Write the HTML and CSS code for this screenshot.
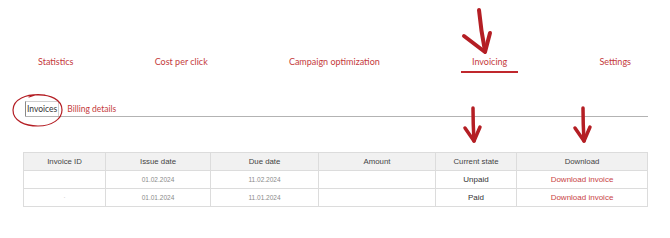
FILE: index.html
```html
<!DOCTYPE html>
<html lang="en">
<head>
    <meta charset="UTF-8">
    <title>Invoicing</title>
    <link rel="stylesheet" href="styles.css">
</head>
<body>
    <div class="page">
        <nav class="main-nav">
            <a href="#">Statistics</a>
            <a href="#">Cost per click</a>
            <a href="#">Campaign optimization</a>
            <a href="#" class="active">Invoicing</a>
            <a href="#">Settings</a>
        </nav>

        <div class="tabs">
            <span class="tab current">Invoices</span>
            <a href="#" class="tab">Billing details</a>
        </div>

        <table class="invoices">
            <thead>
                <tr>
                    <th class="c-id">Invoice ID</th>
                    <th class="c-issue">Issue date</th>
                    <th class="c-due">Due date</th>
                    <th class="c-amount">Amount</th>
                    <th class="c-state">Current state</th>
                    <th class="c-dl">Download</th>
                </tr>
            </thead>
            <tbody>
                <tr>
                    <td></td>
                    <td class="date">01.02.2024</td>
                    <td class="date">11.02.2024</td>
                    <td></td>
                    <td class="state">Unpaid</td>
                    <td><a href="#" class="dl">Download invoice</a></td>
                </tr>
                <tr>
                    <td class="faint">·</td>
                    <td class="date">01.01.2024</td>
                    <td class="date">11.01.2024</td>
                    <td></td>
                    <td class="state">Paid</td>
                    <td><a href="#" class="dl">Download invoice</a></td>
                </tr>
            </tbody>
        </table>

        <!-- hand-drawn annotations -->
        <svg class="mark mark-circle" width="60" height="40" viewBox="0 0 60 40">
            <path d="M35 5 C15 3, 3 10, 3 20 C3 31, 15 36, 28 36 C42 36, 52 29, 52 20 C52 10, 41 4, 25 5 L19 7" />
        </svg>
        <svg class="mark mark-big" width="40" height="55" viewBox="0 0 40 55">
            <path d="M24 5 Q26 26 30 46" />
            <path d="M9 31 L30 47 L35 28" />
        </svg>
        <svg class="mark mark-state" width="25" height="42" viewBox="0 0 25 42">
            <path d="M13 4 Q13 20 14 37" />
            <path d="M5 24 L14 37 L20 23" />
        </svg>
        <svg class="mark mark-dl" width="25" height="42" viewBox="0 0 25 42">
            <path d="M13 4 Q13 20 14 37" />
            <path d="M5 24 L14 37 L20 23" />
        </svg>
    </div>
</body>
</html>
```

FILE: styles.css
```css
body {
    margin: 0;
    background: #fff;
    font-family: "Liberation Sans", Arial, sans-serif;
    color: #333;
}
.page {
    position: relative;
    width: 670px;
    height: 238px;
    overflow: hidden;
}
.main-nav {
    display: flex;
    justify-content: space-between;
    align-items: flex-start;
    height: 73px;
    padding: 0 39px 0 38px;
    box-sizing: border-box;
}
.main-nav a {
    font-family: Lato, "Noto Sans", sans-serif;
    font-size: 9px;
    line-height: 12px;
    color: #c53a3c;
    text-decoration: none;
    padding-top: 56px;
}
.main-nav a.active {
    padding: 56px 11px 3px;
    border-bottom: 2px solid #c0282d;
}
.tabs {
    display: flex;
    align-items: flex-end;
    margin: 28px 22px 0 25px;
    border-bottom: 1px solid #b3b3b3;
}
.tab {
    font-family: Lato, "Noto Sans", sans-serif;
    font-size: 8.5px;
    line-height: 12px;
    padding: 1px;
    color: #c53a3c;
    text-decoration: none;
}
.tab.current {
    color: #333;
    border: 1px solid #d0d0d0;
    border-left-color: #888;
    border-bottom: none;
    background: #fff;
    margin-right: 7px;
}
.invoices {
    margin: 35px 0 0 23px;
    width: 625px;
    border-collapse: collapse;
    table-layout: fixed;
}
.invoices th,
.invoices td {
    border: 1px solid #dcdcdc;
    height: 17px;
    padding: 0;
    text-align: center;
    font-size: 7.5px;
}
.invoices th {
    background: #f1f1f1;
    color: #444;
    font-weight: normal;
    font-size: 7.8px;
}
.c-id { width: 81px; }
.c-issue { width: 104px; }
.c-due { width: 107px; }
.c-amount { width: 116px; }
.c-state { width: 80px; }
.invoices td.date {
    color: #8a8a8a;
    font-size: 6.5px;
}
.invoices td.state {
    color: #333;
    font-size: 8px;
}
.invoices td.faint {
    color: #ccc;
}
.dl {
    color: #c94446;
    text-decoration: none;
    font-size: 8px;
}
.mark {
    position: absolute;
    fill: none;
    stroke: #b41e24;
    stroke-linecap: round;
    stroke-linejoin: round;
}
.mark-circle {
    left: 10px;
    top: 90px;
    stroke-width: 1.2;
}
.mark-big {
    left: 455px;
    top: 5px;
    stroke-width: 4;
}
.mark-state {
    left: 460px;
    top: 104px;
    stroke-width: 3.5;
}
.mark-dl {
    left: 570px;
    top: 104px;
    stroke-width: 3.5;
}
```
